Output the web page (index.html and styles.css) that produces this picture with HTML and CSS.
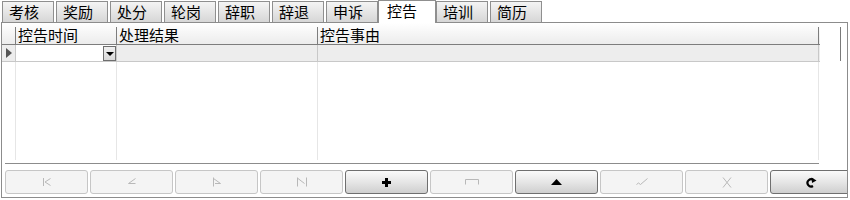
FILE: index.html
```html
<!DOCTYPE html>
<html>
<head>
<meta charset="utf-8">
<link rel="stylesheet" href="styles.css">
</head>
<body>
<div class="tabs">
  <div class="tab">考核</div>
  <div class="tab">奖励</div>
  <div class="tab">处分</div>
  <div class="tab">轮岗</div>
  <div class="tab">辞职</div>
  <div class="tab">辞退</div>
  <div class="tab">申诉</div>
  <div class="tab active">控告</div>
  <div class="tab">培训</div>
  <div class="tab">简历</div>
</div>
<div class="panel">
  <div class="top">
    <div class="grid">
      <div class="hrow">
        <div class="c ind"></div>
        <div class="c c1 hc">控告时间</div>
        <div class="c c2 hc">处理结果</div>
        <div class="c c3 hc">控告事由</div>
      </div>
      <div class="row">
        <div class="c ind cur"><span class="tri"></span></div>
        <div class="c c1 edit"><span class="dd"><span class="ddtri"></span></span></div>
        <div class="c c2"></div>
        <div class="c c3"></div>
      </div>
      <div class="filler">
        <div class="c ind"></div>
        <div class="c c1"></div>
        <div class="c c2"></div>
        <div class="c c3"></div>
      </div>
    </div>
    <div class="vscroll"><div class="thumb"></div></div>
  </div>
  <div class="sep"></div>
  <div class="nav">
    <div class="btn"><svg width="10" height="10" viewBox="0 0 10 10"><path d="M1.5 1v8M8.5 1.5L3 5l5.5 3.5" fill="none" stroke="#b8b8b8" stroke-width="1"/></svg></div>
    <div class="btn"><svg width="10" height="10" viewBox="0 0 10 10"><path d="M8.5 1.5L1.5 6.5h7" fill="none" stroke="#b8b8b8" stroke-width="1"/></svg></div>
    <div class="btn"><svg width="10" height="10" viewBox="0 0 10 10"><path d="M1.5 0.5v9M1.5 1.5L8.5 6.5H3" fill="none" stroke="#b8b8b8" stroke-width="1"/></svg></div>
    <div class="btn"><svg width="12" height="10" viewBox="0 0 12 10"><path d="M1.5 0.5v9M2 1.5l6.5 5M10.5 0.5v9" fill="none" stroke="#b8b8b8" stroke-width="1"/></svg></div>
    <div class="btn on"><svg width="9" height="9" viewBox="0 0 9 9"><path d="M3 0h3v3h3v3H6v3H3V6H0V3h3z" fill="#000"/></svg></div>
    <div class="btn"><svg width="14" height="6" viewBox="0 0 14 6"><path d="M0.5 5.5V0.5h13v5" fill="none" stroke="#b8b8b8" stroke-width="1"/></svg></div>
    <div class="btn on"><svg width="11" height="6" viewBox="0 0 11 6"><path d="M5.5 0L11 6H0z" fill="#000"/></svg></div>
    <div class="btn"><svg width="12" height="8" viewBox="0 0 12 8"><path d="M0.5 6.5l2-1.5 2 1.5L11.5 0.5" fill="none" stroke="#b8b8b8" stroke-width="1"/></svg></div>
    <div class="btn"><svg width="10" height="11" viewBox="0 0 10 11"><path d="M1 0.5l8 10M9 0.5l-8 10" fill="none" stroke="#b8b8b8" stroke-width="1"/></svg></div>
    <div class="btn on"><svg width="11" height="11" viewBox="0 0 11 11"><path d="M7.5 3.2A3.6 3.6 0 1 0 7 9" fill="none" stroke="#000" stroke-width="2.2"/><path d="M5.5 0.5L10.5 3.5 6 6z" fill="#000"/></svg></div>
  </div>
</div>
</body>
</html>
```
FILE: styles.css
```css
* { box-sizing: border-box; }
body {
  margin: 0;
  width: 850px;
  height: 200px;
  background: #fff;
  font-family: "Noto Sans CJK SC", "Noto Sans", sans-serif;
  font-size: 15px;
  color: #000;
  overflow: hidden;
}
.tabs {
  display: flex;
  height: 22px;
  padding-left: 2px;
  position: relative;
  z-index: 2;
}
.tab {
  width: 52px;
  height: 21px;
  margin-top: 1px;
  margin-right: 2px;
  border: 1px solid #8f8f8f;
  border-bottom: none;
  background: linear-gradient(#f4f4f4, #d6d6d6);
  padding-left: 6px;
  line-height: 20px;
}
.tab.active {
  width: 58px;
  height: 23px;
  margin-top: 0;
  margin-left: -2px;
  margin-right: 0;
  background: #fff;
  padding-left: 8px;
  line-height: 20px;
}
.panel {
  margin-left: 1px;
  width: 847px;
  height: 176px;
  border: 1px solid #8c8c8c;
  display: flex;
  flex-direction: column;
  overflow: hidden;
  position: relative;
  z-index: 1;
}
.top {
  display: flex;
  height: 137px;
}
.grid {
  width: 818px;
  display: flex;
  flex-direction: column;
}
.hrow, .row, .filler { display: flex; }
.c { border-right: 1px solid #d4d4d4; }
.ind { width: 14px; }
.c1 { width: 101px; }
.c2 { width: 201px; }
.c3 { width: 501px; }
.hrow {
  height: 22px;
  border-bottom: 1px solid #7d7d7d;
  background: linear-gradient(#ffffff, #ececec);
}
.hrow .c {
  border-right: none;
  position: relative;
}
.hrow .c::after {
  content: "";
  position: absolute;
  right: 0;
  top: 4px;
  bottom: 0;
  width: 1px;
  background: #7d7d7d;
}
.hc {
  padding-left: 2px;
  line-height: 23px;
}
.row {
  height: 17px;
  border-bottom: 1px solid #c8c8c8;
  background: #ededed;
}
.row .c { border-right-color: #c8c8c8; }
.cur {
  display: flex;
  align-items: center;
  padding-left: 4px;
}
.tri {
  width: 0;
  height: 0;
  border-top: 5px solid transparent;
  border-bottom: 5px solid transparent;
  border-left: 6px solid #555;
}
.edit {
  background: #fff;
  display: flex;
  justify-content: flex-end;
  align-items: center;
  padding-right: 0;
}
.dd {
  width: 13px;
  height: 15px;
  border: 1px solid #6e6e6e;
  background: linear-gradient(#f0f0f0, #d8d8d8);
  display: flex;
  align-items: center;
  justify-content: center;
  padding-top: 2px;
}
.ddtri {
  width: 0;
  height: 0;
  border-left: 4px solid transparent;
  border-right: 4px solid transparent;
  border-top: 4px solid #000;
}
.filler {
  flex: 1;
}
.filler .c { border-right-color: #e6e6e6; }
.vscroll {
  width: 27px;
  display: flex;
  justify-content: flex-end;
  padding-right: 6px;
  padding-top: 4px;
}
.thumb {
  width: 1px;
  height: 34px;
  background: #7a7a7a;
}
.sep {
  margin-left: 3px;
  width: 814px;
  height: 1px;
  background: #8c8c8c;
  margin-top: 3px;
}
.nav {
  display: flex;
  gap: 2px;
  padding-left: 3px;
  margin-top: 6px;
}
.btn {
  flex: 0 0 83px;
  height: 24px;
  border: 1px solid #c6c6c6;
  border-radius: 3px;
  background: #f4f4f4;
  display: flex;
  align-items: center;
  justify-content: center;
}
.btn.on {
  border-color: #6f6f6f;
  background: linear-gradient(#fafafa, #e6e6e6 50%, #cfcfcf);
}
```
